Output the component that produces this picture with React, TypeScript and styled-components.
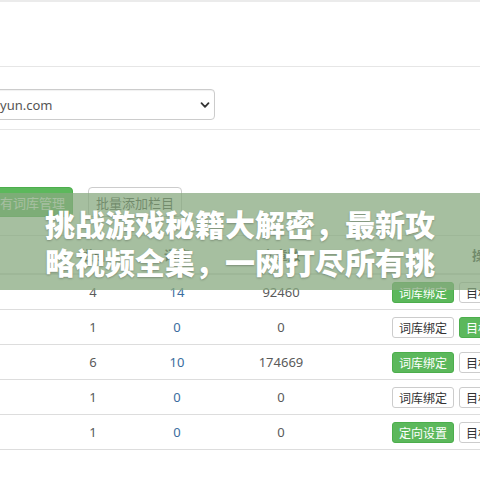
import styled, { createGlobalStyle } from "styled-components";

const GlobalStyle = createGlobalStyle`
  html, body {
    margin: 0;
    padding: 0;
    background: #ffffff;
    overflow: hidden;
  }
  body {
    font-family: "Noto Sans", "Noto Sans CJK SC", sans-serif;
    color: #555;
  }
`;

type Kind = "green" | "plain";

const rows: { a: string; b: string; c: string; acts: [string, Kind][] }[] = [
  { a: "4", b: "14", c: "92460", acts: [["词库绑定", "green"], ["目标设置", "plain"]] },
  { a: "1", b: "0", c: "0", acts: [["词库绑定", "plain"], ["目标设置", "green"]] },
  { a: "6", b: "10", c: "174669", acts: [["词库绑定", "green"], ["目标设置", "plain"]] },
  { a: "1", b: "0", c: "0", acts: [["词库绑定", "plain"], ["目标设置", "plain"]] },
  { a: "1", b: "0", c: "0", acts: [["定向设置", "green"], ["目标设置", "plain"]] },
];

const Chevron = () => (
  <svg width="12" height="12" viewBox="0 0 12 12">
    <path d="M2.5 4.2 6 7.8 9.5 4.2" fill="none" stroke="#333" strokeWidth="1.8" strokeLinecap="round" strokeLinejoin="round" />
  </svg>
);

const App = () => {
  return (
    <Page>
      <GlobalStyle />
      <FormRow $h={64} />
      <FormRow $h={62}>
        <SelectBox>
          <span>yun.com</span>
          <Chevron />
        </SelectBox>
      </FormRow>
      <Toolbar>
        <ToolButton $kind="green" $offset={-21}>现有词库管理</ToolButton>
        <ToolButton $kind="plain">批量添加栏目</ToolButton>
      </Toolbar>
      <Table>
        <HeadRow>
          <HeadCell />
          <HeadCell>栏目</HeadCell>
          <HeadCell>词库</HeadCell>
          <HeadCell>文章数</HeadCell>
          <HeadCell>操作</HeadCell>
        </HeadRow>
        {rows.map((r, i) => (
          <Row key={i}>
            <Cell />
            <Cell>{r.a}</Cell>
            <Cell $link>{r.b}</Cell>
            <Cell>{r.c}</Cell>
            <Actions>
              {r.acts.map(([label, kind], j) => (
                <SmallButton key={j} $kind={kind}>{label}</SmallButton>
              ))}
            </Actions>
          </Row>
        ))}
      </Table>
      <Banner>
        挑战游戏秘籍大解密，最新攻
        <br />
        略视频全集，一网打尽所有挑
      </Banner>
    </Page>
  );
};

export default App;

const Page = styled.div`
  position: relative;
  width: 480px;
  height: 480px;
  overflow: hidden;
  border-top: 2px solid #ebebeb;
  box-sizing: border-box;
`;

const FormRow = styled.div<{ $h: number }>`
  height: ${(p) => p.$h}px;
  border-bottom: 1px solid #e6e6e6;
  display: flex;
  align-items: flex-end;
`;

const SelectBox = styled.div`
  margin: 0 0 9px -20px;
  width: 235px;
  height: 31px;
  box-sizing: border-box;
  border: 1px solid #cccccc;
  border-radius: 4px;
  box-shadow: inset 0 1px 1px rgba(0, 0, 0, 0.06);
  display: flex;
  align-items: center;
  justify-content: space-between;
  padding: 0 3px 0 19px;
  font-size: 13px;
  color: #555;
`;

const Toolbar = styled.div`
  display: flex;
  gap: 15px;
  padding-top: 57px;
  height: 30px;
  margin-bottom: 18px;
`;

const ToolButton = styled.div<{ $kind: Kind; $offset?: number }>`
  margin-left: ${(p) => p.$offset ?? 0}px;
  height: 30px;
  box-sizing: border-box;
  display: flex;
  align-items: center;
  padding: 0 7px;
  font-size: 13px;
  border-radius: 4px;
  font-family: "Noto Sans CJK SC", sans-serif;
  border: 1px solid ${(p) => (p.$kind === "green" ? "#4cae4c" : "#cccccc")};
  background: ${(p) => (p.$kind === "green" ? "#5cb85c" : "#ffffff")};
  color: ${(p) => (p.$kind === "green" ? "#ffffff" : "#333333")};
`;

const Table = styled.div`
  width: 631px;
  display: flex;
  flex-direction: column;
`;

const grid = `
  display: grid;
  grid-template-columns: 55px 76px 92px 116px 292px;
  align-items: center;
`;

const HeadRow = styled.div`
  ${grid}
  height: 37px;
  border-top: 1px solid #dddddd;
  border-bottom: 2px solid #dddddd;
`;

const HeadCell = styled.div`
  text-align: center;
  font-size: 13px;
  font-weight: 700;
  color: #333;
  font-family: "Noto Sans CJK SC", sans-serif;
`;

const Row = styled.div`
  ${grid}
  height: 34px;
  border-bottom: 1px solid #dddddd;
`;

const Cell = styled.div<{ $link?: boolean }>`
  text-align: center;
  font-size: 13px;
  color: ${(p) => (p.$link ? "#3a6d9e" : "#5a5a5a")};
`;

const Actions = styled.div`
  display: flex;
  gap: 5px;
  padding-left: 53px;
`;

const SmallButton = styled.div<{ $kind: Kind }>`
  height: 21px;
  box-sizing: border-box;
  display: flex;
  align-items: center;
  padding: 0 6px;
  font-size: 12px;
  border-radius: 3px;
  font-family: "Noto Sans CJK SC", sans-serif;
  border: 1px solid ${(p) => (p.$kind === "green" ? "#4cae4c" : "#cccccc")};
  background: ${(p) => (p.$kind === "green" ? "#5cb85c" : "#ffffff")};
  color: ${(p) => (p.$kind === "green" ? "#ffffff" : "#333333")};
`;

const Banner = styled.div`
  position: absolute;
  left: 0;
  right: 0;
  top: 191px;
  height: 97px;
  box-sizing: border-box;
  padding-top: 11px;
  background: rgba(136, 170, 128, 0.75);
  text-align: center;
  font-family: "Noto Sans CJK SC", sans-serif;
  font-weight: 900;
  font-size: 30px;
  line-height: 38px;
  color: #ffffff;
  text-shadow: 0 1px 2px rgba(0, 0, 0, 0.25);
`;
